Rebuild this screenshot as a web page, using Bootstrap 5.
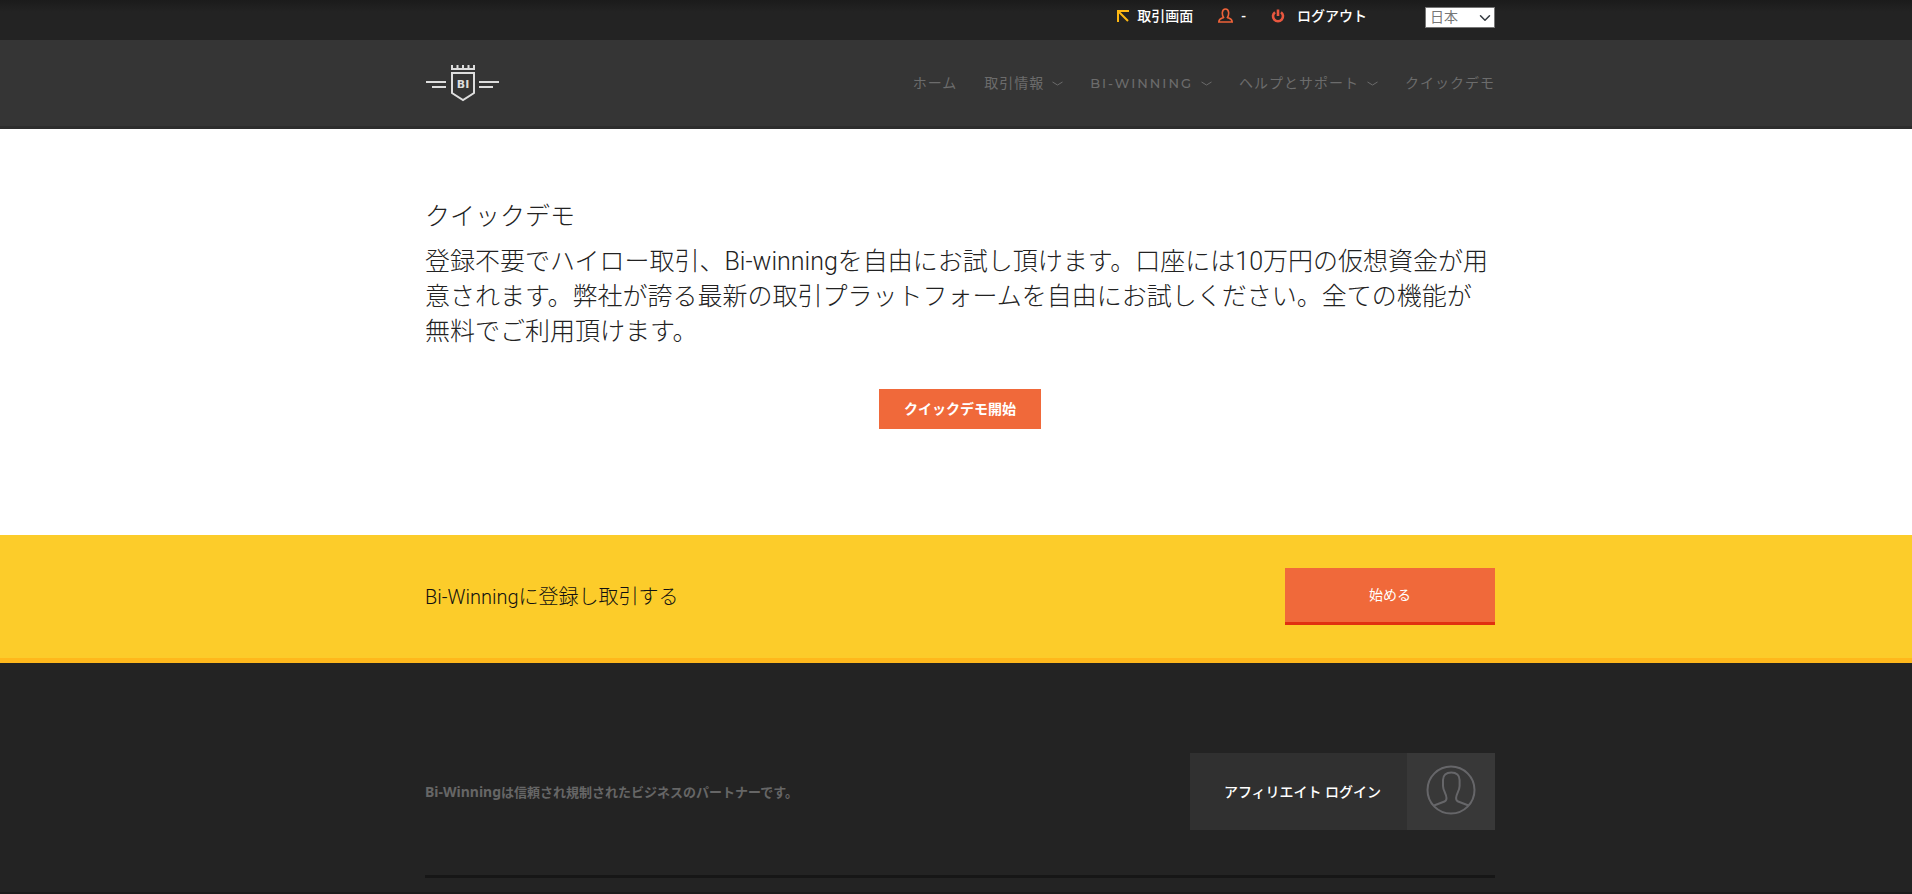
<!DOCTYPE html>
<html lang="ja">
<head>
<meta charset="utf-8">
<meta name="viewport" content="width=device-width, initial-scale=1">
<title>クイックデモ</title>
<link rel="stylesheet" href="https://cdn.jsdelivr.net/npm/bootstrap@5.3.0/dist/css/bootstrap.min.css">
<style>
body{font-family:Roboto,"Noto Sans CJK JP",sans-serif;font-size:14px;line-height:20px;color:#222;background:#fff}
.site-wrap{max-width:1100px;padding-left:19px;padding-right:11px}
.topbar{background:linear-gradient(#1b1b1b,#232323 12px);height:40px;font-weight:500;padding-top:7px}
.topbar a{color:#fff}
.top-links{gap:25px;margin-right:58px;padding-top:1px}
.lang-select{width:70px;height:21px;padding:0 0 0 4px;border:1px solid #767676;border-radius:0;font-size:14px;line-height:19px;color:#777;background-color:#fff;background-position:right 3px center;background-size:12px 12px}
.main-nav{background:#353535;border-bottom:3px solid #2d2d2d;height:89px}
.main-nav .nav{column-gap:27px}
.main-nav .nav-link{display:flex;align-items:center;gap:8px;font-family:"Montserrat","Inter","Noto Sans CJK JP",sans-serif;font-size:14px;font-weight:400;letter-spacing:1px;line-height:22px;color:#6c6c6c;padding:0}
.main-nav .nav-latin{font-size:13px;font-weight:500;letter-spacing:2px}
.intro{padding-top:70px;padding-bottom:106px}
.intro h1,.intro p{font-size:25px;line-height:35px;font-weight:300}
.intro h1{margin-bottom:10px}
.btn-site{background:#f0693a;color:#fff;border:0;border-radius:0;font-size:14px}
.btn-site:hover{background:#e0592a;color:#fff}
.btn-demo{width:162px;height:40px;margin-top:40px;font-weight:700}
.cta{background:#fccc2a;border-bottom:5px solid #ffb81c;height:128px}
.cta h2{font-size:20px;line-height:28px;font-weight:300;color:#111}
.btn-start{width:210px;height:57px;border-bottom:3px solid #e03010}
.site-footer{background:#232323;border-bottom:2px solid #1b1b1b;padding-top:90px}
.slogan{font-family:"Noto Sans","Noto Sans CJK JP",sans-serif;font-size:13px;font-weight:700;color:#666}
.slogan span{font-size:14px}
.affiliate{width:305px;height:77px;background:#303030;color:#fff;font-weight:500}
.affiliate:hover{color:#fff}
.affiliate-icon{width:88px;background:#383838}
.footer-rule{border-top:3px solid #161616;opacity:1;margin:45px 0 0}
</style>
</head>
<body class="d-flex flex-column min-vh-100">
<div class="topbar">
  <div class="container site-wrap d-flex justify-content-end align-items-start">
    <div class="top-links d-flex align-items-center">
    <a href="#" class="text-decoration-none d-flex align-items-center lh-1">
      <svg width="12" height="12" class="me-2" viewBox="0 0 12 12" fill="none" stroke="#fdb813" stroke-width="2" aria-hidden="true"><path d="M1 12V1h11M1.500 1.500 11 11"/></svg>取引画面</a>
    <a href="#" class="text-decoration-none d-flex align-items-center lh-1">
      <svg width="15" height="15" class="me-2" viewBox="0 0 15 15" fill="none" stroke="#ee6239" stroke-width="1.600" aria-hidden="true"><path d="M5.600 9.500C3.800 7 3.500 1 7.500 1s3.700 6 1.900 8.500c.8.900 4.600.6 4.800 4.500H.8c.2-3.900 4-3.600 4.800-4.500z"/></svg>-</a>
    <a href="#" class="text-decoration-none d-flex align-items-center lh-1">
      <svg width="14" height="14" class="me-2" viewBox="0 0 14 14" fill="none" stroke="#e9573f" stroke-width="2.600" aria-hidden="true"><path d="M4 3.200a5 5 0 1 0 6 0M7 .5v6.500"/></svg><span class="ps-1">ログアウト</span></a>
    </div>
    <select class="form-select lang-select" aria-label="言語"><option>日本</option><option>English</option></select>
  </div>
</div>
<nav class="main-nav">
  <div class="container site-wrap d-flex justify-content-between align-items-start pt-4">
    <a href="#" aria-label="Bi-Winning">
      <svg width="76" height="38" viewBox="0 0 76 38" fill="none" stroke="#ddd" stroke-width="2" aria-hidden="true"><path d="M1 18h20M7 23h14M54 18h20M54 23h14M26 5h24M27 9h22v20l-11 7-11-7zM27 1v4M32.500 1v4M38 1v4M43.500 1v4M49 1v4"/><text x="38" y="24" text-anchor="middle" fill="#ddd" stroke="none" font-family="DejaVu Sans,sans-serif" font-size="11" font-weight="700">BI</text></svg>
    </a>
    <ul class="nav pt-2">
      <li><a href="#" class="nav-link">ホーム</a></li>
      <li><a href="#" class="nav-link">取引情報<svg width="11" height="5" viewBox="0 0 11 5" fill="none" stroke="currentColor" aria-hidden="true"><path d="m.5 1 5 3 5-3"/></svg></a></li>
      <li><a href="#" class="nav-link nav-latin">BI-WINNING<svg width="11" height="5" viewBox="0 0 11 5" fill="none" stroke="currentColor" aria-hidden="true"><path d="m.5 1 5 3 5-3"/></svg></a></li>
      <li><a href="#" class="nav-link">ヘルプとサポート<svg width="11" height="5" viewBox="0 0 11 5" fill="none" stroke="currentColor" aria-hidden="true"><path d="m.5 1 5 3 5-3"/></svg></a></li>
      <li><a href="#" class="nav-link">クイックデモ</a></li>
    </ul>
  </div>
</nav>
<main>
  <section class="container site-wrap intro">
    <h1>クイックデモ</h1>
    <p class="mb-0">登録不要でハイロー取引、Bi-winningを自由にお試し頂けます。口座には10万円の仮想資金が用意されます。弊社が誇る最新の取引プラットフォームを自由にお試しください。全ての機能が無料でご利用頂けます。</p>
    <div class="text-center"><button type="button" class="btn btn-site btn-demo p-0">クイックデモ開始</button></div>
  </section>
  <section class="cta d-flex align-items-center">
    <div class="container site-wrap d-flex justify-content-between align-items-center">
      <h2 class="mb-0">Bi-Winningに登録し取引する</h2>
      <button type="button" class="btn btn-site btn-start p-0">始める</button>
    </div>
  </section>
</main>
<footer class="site-footer flex-grow-1">
  <div class="container site-wrap">
    <div class="d-flex justify-content-between align-items-center">
      <p class="slogan mb-0"><span>Bi-Winning</span>は信頼され規制されたビジネスのパートナーです。</p>
      <a href="#" class="affiliate d-flex text-decoration-none">
        <span class="flex-grow-1 d-flex align-items-center justify-content-center ps-2">アフィリエイト ログイン</span>
        <span class="affiliate-icon d-flex align-items-center justify-content-center pb-1">
          <svg width="50" height="50" viewBox="0 0 50 50" fill="none" stroke="#666669" stroke-width="2" aria-hidden="true"><circle cx="25" cy="25" r="23.500"/><path d="M8 40.500l10.500-4c1.500-.6 2-1.500 2-3.500 0-4-3.500-7.500-3.500-12v-6c0-4.500 3-7.500 8.300-7.500s8.300 3 8.300 7.500v6c0 4.500-3.500 8-3.500 12 0 2 .5 2.900 2 3.500l10.500 4"/></svg>
        </span>
      </a>
    </div>
    <hr class="footer-rule">
  </div>
</footer>
<script src="https://cdn.jsdelivr.net/npm/bootstrap@5.3.0/dist/js/bootstrap.bundle.min.js"></script>
</body>
</html>
